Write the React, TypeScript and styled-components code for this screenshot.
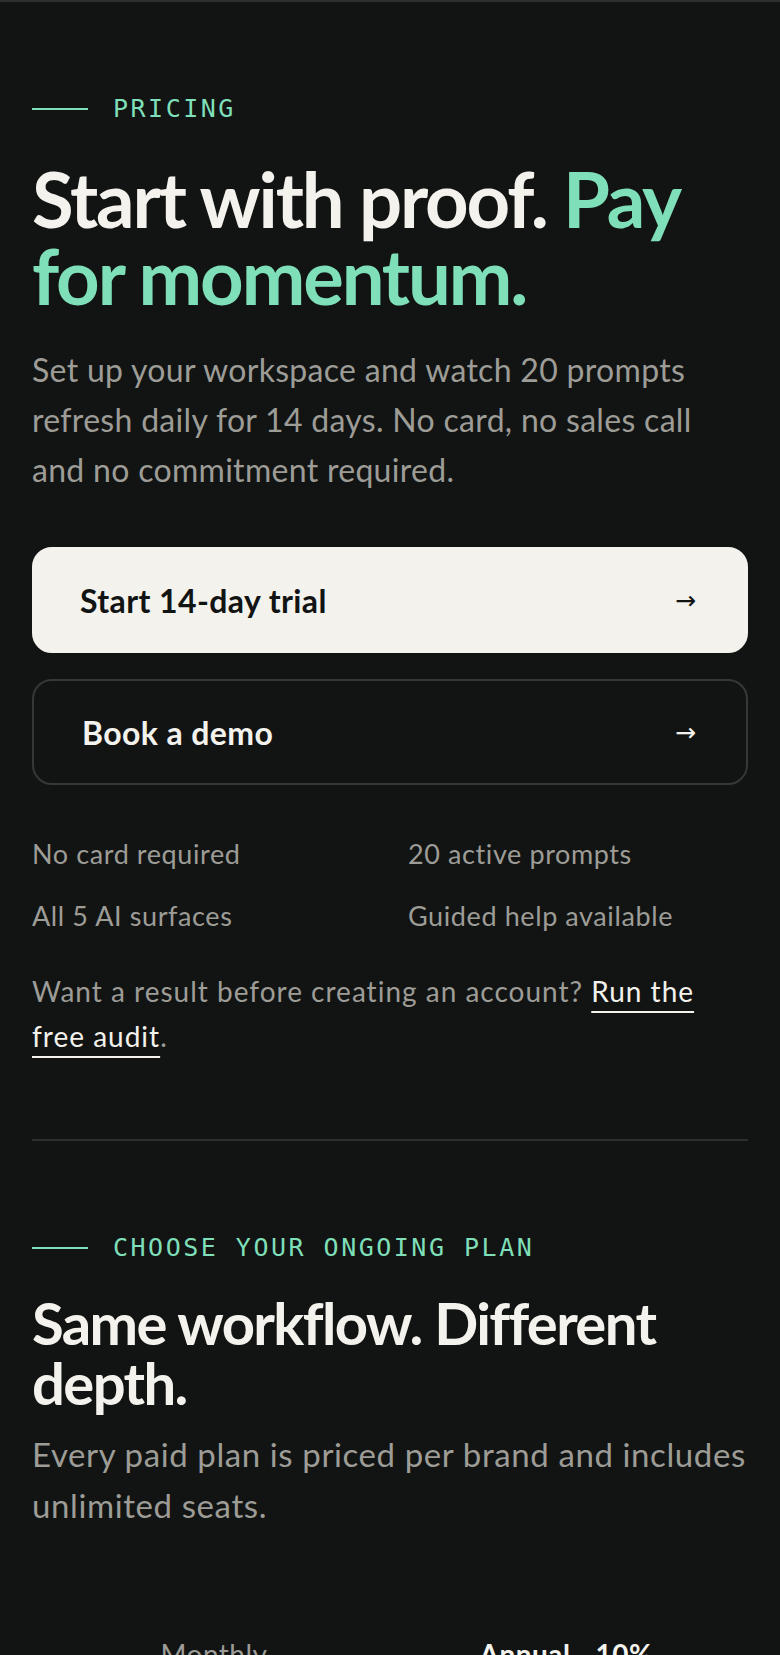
import React from "react";
import styled, { createGlobalStyle } from "styled-components";

const colors = {
  bg: "#121413",
  light: "#f3f2ed",
  green: "#7edfb8",
  gray: "#9d9c97",
  line: "#2d2f2e",
  border: "#363836",
};

const sans = `"Lato", "Noto Sans", sans-serif`;
const mono = `"DejaVu Sans Mono", "Liberation Mono", monospace`;

const GlobalStyle = createGlobalStyle`
  html, body {
    margin: 0;
    padding: 0;
    background: ${colors.bg};
  }
  * { box-sizing: border-box; }
`;

const Page = styled.main`
  border-top: 2px solid ${colors.line};
  padding: 0 32px 40px;
  font-family: ${sans};
  color: ${colors.light};
`;

const Section = styled.section`
  padding-top: 92px;
  display: flex;
  flex-direction: column;
`;

const Eyebrow = styled.div`
  display: flex;
  align-items: center;
  gap: 25px;
  height: 30px;
`;

const EyebrowLine = styled.span`
  width: 56px;
  height: 2px;
  background: ${colors.green};
`;

const EyebrowText = styled.span`
  font-family: ${mono};
  font-size: 25px;
  line-height: 30px;
  letter-spacing: 2.5px;
  color: ${colors.green};
  text-transform: uppercase;
`;

const Headline = styled.h1<{ $size: number; $lh: number; $mt: number }>`
  margin: ${(p) => p.$mt}px 0 0;
  font-family: ${sans};
  font-weight: 700;
  font-size: ${(p) => p.$size}px;
  line-height: ${(p) => p.$lh}px;
  letter-spacing: -0.028em;
  color: ${colors.light};
`;

const Accent = styled.span`
  color: ${colors.green};
`;

const Lead = styled.p<{ $mt: number; $lh: number; $size: number; $ls: number }>`
  margin: ${(p) => p.$mt}px 0 0;
  font-size: ${(p) => p.$size}px;
  line-height: ${(p) => p.$lh}px;
  letter-spacing: ${(p) => p.$ls}px;
  color: ${colors.gray};
`;

const Actions = styled.div`
  margin-top: 52px;
  display: flex;
  flex-direction: column;
  gap: 26px;
`;

const ActionButton = styled.a<{ $primary?: boolean }>`
  display: flex;
  align-items: center;
  justify-content: space-between;
  height: 106px;
  padding: 0 50px 0 ${(p) => (p.$primary ? 46 : 48)}px;
  border-radius: 20px;
  font-family: ${sans};
  font-weight: 700;
  font-size: 32px;
  letter-spacing: 0.4px;
  text-decoration: none;
  cursor: pointer;
  background: ${(p) => (p.$primary ? colors.light : "transparent")};
  color: ${(p) => (p.$primary ? "#121413" : colors.light)};
  border: 2px solid ${(p) => (p.$primary ? colors.light : colors.border)};
`;

const Arrow = styled.span`
  font-family: "DejaVu Sans", sans-serif;
  font-weight: 400;
  font-size: 25px;
  letter-spacing: 0;
`;

const Features = styled.ul`
  list-style: none;
  margin: 54px 0 0;
  padding: 0;
  display: grid;
  grid-template-columns: 1fr 1fr;
  column-gap: 36px;
  row-gap: 32px;
`;

const Feature = styled.li`
  font-size: 27px;
  line-height: 30px;
  letter-spacing: 0.6px;
  color: ${colors.gray};
`;

const Note = styled.p`
  margin: 38px 0 0;
  font-size: 28px;
  line-height: 45px;
  letter-spacing: 1px;
  color: ${colors.gray};
`;

const NoteLink = styled.a`
  color: ${colors.light};
  text-decoration: underline;
  text-decoration-thickness: 2px;
  text-underline-offset: 9px;
  cursor: pointer;
`;

const Divider = styled.hr`
  margin: 80px 0 0;
  border: none;
  height: 2px;
  background: ${colors.line};
`;

const Toggle = styled.div`
  margin-top: 80px;
  padding: 6px;
  display: grid;
  grid-template-columns: 1fr 1fr;
  border-radius: 999px;
`;

const Segment = styled.button<{ $active?: boolean }>`
  display: flex;
  align-items: center;
  justify-content: center;
  gap: 14px;
  padding: 22px 0;
  background: transparent;
  border: none;
  font-family: ${sans};
  font-size: 28px;
  line-height: 30px;
  letter-spacing: 0.5px;
  font-weight: ${(p) => (p.$active ? 700 : 400)};
  color: ${(p) => (p.$active ? colors.light : colors.gray)};
  cursor: pointer;
`;

const Badge = styled.span`
  font-weight: 700;
  color: ${colors.light};
`;

export default function App() {
  return (
    <>
      <GlobalStyle />
      <Page>
        <Section>
          <Eyebrow>
            <EyebrowLine />
            <EyebrowText>Pricing</EyebrowText>
          </Eyebrow>
          <Headline $size={76} $lh={77} $mt={36}>
            Start with proof. <Accent>Pay for momentum.</Accent>
          </Headline>
          <Lead $mt={31} $lh={50} $size={32} $ls={0.3}>
            Set up your workspace and watch 20 prompts refresh daily for 14
            days. No card, no sales call and no commitment required.
          </Lead>
          <Actions>
            <ActionButton $primary>
              <span>Start 14-day trial</span>
              <Arrow>→</Arrow>
            </ActionButton>
            <ActionButton>
              <span>Book a demo</span>
              <Arrow>→</Arrow>
            </ActionButton>
          </Actions>
          <Features>
            <Feature>No card required</Feature>
            <Feature>20 active prompts</Feature>
            <Feature>All 5 AI surfaces</Feature>
            <Feature>Guided help available</Feature>
          </Features>
          <Note>
            Want a result before creating an account?{" "}
            <NoteLink>Run the free audit</NoteLink>.
          </Note>
        </Section>
        <Divider />
        <Section>
          <Eyebrow>
            <EyebrowLine />
            <EyebrowText>Choose your ongoing plan</EyebrowText>
          </Eyebrow>
          <Headline $size={58} $lh={60} $mt={30}>
            Same workflow. Different depth.
          </Headline>
          <Lead $mt={16} $lh={51} $size={33} $ls={0.6}>
            Every paid plan is priced per brand and includes unlimited seats.
          </Lead>
          <Toggle>
            <Segment>Monthly</Segment>
            <Segment $active>
              Annual <Badge>-10%</Badge>
            </Segment>
          </Toggle>
        </Section>
      </Page>
    </>
  );
}
